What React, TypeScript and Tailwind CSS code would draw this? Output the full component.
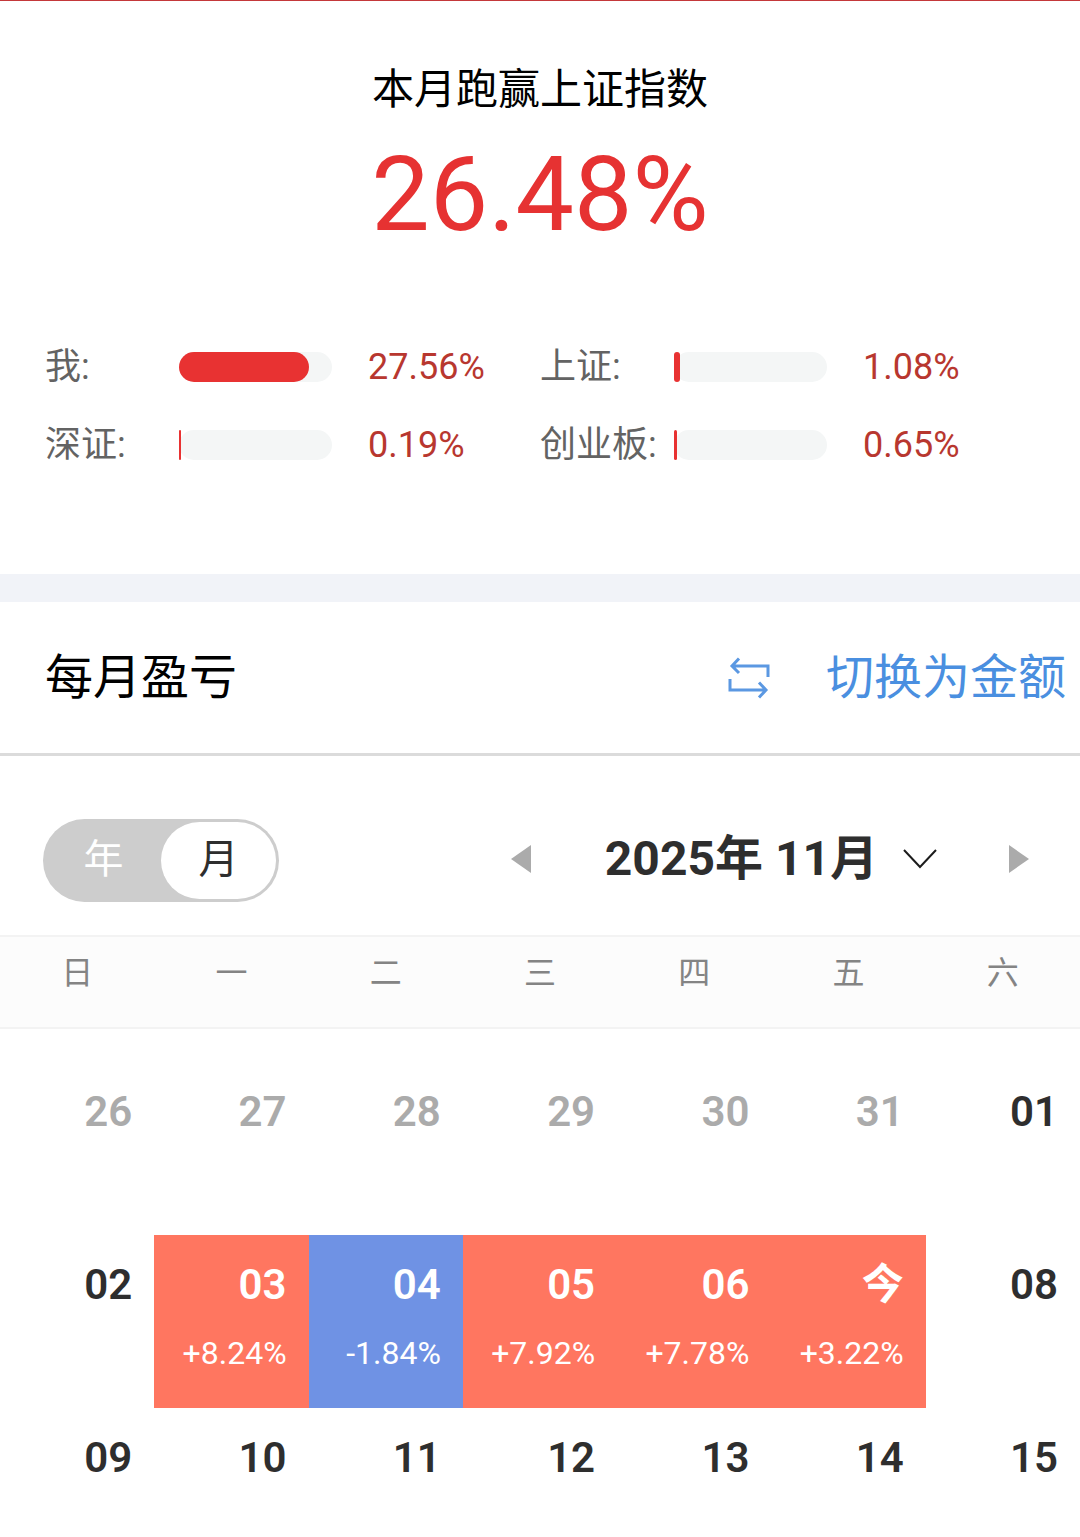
import { useState } from "react";

const BENCHMARKS = [
  { label: "我", value: 27.56, fill: 85 },
  { label: "上证", value: 1.08, fill: 4 },
  { label: "深证", value: 0.19, fill: 1 },
  { label: "创业板", value: 0.65, fill: 2 },
];

const WEEKDAYS = ["日", "一", "二", "三", "四", "五", "六"];

type Day = { label: string; muted?: boolean; change?: number };

const WEEKS: Day[][] = [
  [
    { label: "26", muted: true },
    { label: "27", muted: true },
    { label: "28", muted: true },
    { label: "29", muted: true },
    { label: "30", muted: true },
    { label: "31", muted: true },
    { label: "01" },
  ],
  [
    { label: "02" },
    { label: "03", change: 8.24 },
    { label: "04", change: -1.84 },
    { label: "05", change: 7.92 },
    { label: "06", change: 7.78 },
    { label: "今", change: 3.22 },
    { label: "08" },
  ],
  [
    { label: "09" },
    { label: "10" },
    { label: "11" },
    { label: "12" },
    { label: "13" },
    { label: "14" },
    { label: "15" },
  ],
];

function formatChange(change: number) {
  return `${change > 0 ? "+" : "-"}${Math.abs(change).toFixed(2)}%`;
}

function dayColor(day: Day) {
  if (day.change === undefined) {
    return day.muted ? "text-[#ababab]" : "text-[#2e2e2e]";
  }
  return day.change > 0 ? "bg-[#ff7660] text-white" : "bg-[#6f92e4] text-white";
}

function Summary() {
  return (
    <section className="border-t border-[#c4383a] pt-[59px] pb-[105px]">
      <h1 className="text-center text-[42px] leading-[60px] text-black">本月跑赢上证指数</h1>
      <p className="text-center text-[104px] leading-[150px] text-[#e63232]">26.48%</p>
      <dl className="mt-[73px] grid grid-cols-2 gap-y-[30px] px-[45px]">
        {BENCHMARKS.map(({ label, value, fill }) => (
          <div key={label} className="flex items-center text-[36px] leading-[48px]">
            <dt className="w-[134px] shrink-0 whitespace-nowrap text-[#636363]">{label}:</dt>
            <dd className="flex items-center gap-9 text-[#b8372f]">
              <span className="block h-[30px] w-[153px] rounded-full bg-[#f4f6f6]">
                <span
                  className="block h-full rounded-full bg-[#e83232]"
                  style={{ width: `${fill}%` }}
                />
              </span>
              {value.toFixed(2)}%
            </dd>
          </div>
        ))}
      </dl>
    </section>
  );
}

function SwapIcon() {
  return (
    <svg
      width="42"
      height="42"
      viewBox="0 0 42 42"
      fill="none"
      stroke="#5b98e2"
      strokeWidth="3"
      aria-hidden="true"
    >
      <path d="M40 20V9H4M11 1.5L4 9l7 7" />
      <path d="M2 22v11h36M31 25.5l7 7.5-7 7.5" />
    </svg>
  );
}

function PeriodToggle() {
  const [period, setPeriod] = useState("月");

  return (
    <div
      role="radiogroup"
      aria-label="周期"
      className="flex h-[83px] w-[236px] rounded-full bg-[#cdcdcd] p-[3px] text-[40px] leading-[60px]"
    >
      {["年", "月"].map((option) => (
        <label
          key={option}
          className="flex flex-1 cursor-pointer justify-center rounded-full pt-2 text-white has-checked:bg-white has-checked:text-[#2e2e2e]"
        >
          <input
            type="radio"
            name="period"
            value={option}
            checked={period === option}
            onChange={() => setPeriod(option)}
            className="sr-only"
          />
          {option}
        </label>
      ))}
    </div>
  );
}

function MonthPicker() {
  return (
    <div className="flex items-center text-[#2e2e2e]">
      <button type="button" aria-label="上个月">
        <svg width="20" height="28" viewBox="0 0 20 28" fill="#ababab">
          <path d="M20 0v28L0 14z" />
        </svg>
      </button>
      <button
        type="button"
        className="mr-[71px] ml-[74px] flex items-center gap-6 text-[48px] leading-[80px] font-bold"
      >
        2025年 11月
        <svg
          width="36"
          height="20"
          viewBox="0 0 36 20"
          fill="none"
          stroke="#1c1c1c"
          strokeWidth="2"
          aria-hidden="true"
        >
          <path d="M2 1l16 17L34 1" />
        </svg>
      </button>
      <button type="button" aria-label="下个月">
        <svg width="20" height="28" viewBox="0 0 20 28" fill="#ababab">
          <path d="M0 0v28l20-14z" />
        </svg>
      </button>
    </div>
  );
}

function Calendar() {
  return (
    <table className="w-full table-fixed">
      <thead>
        <tr className="h-[92px] border-y-2 border-[#f3f3f3] bg-[#fcfcfc] text-[32px] leading-[48px] text-[#848484]">
          {WEEKDAYS.map((weekday) => (
            <th key={weekday} scope="col" className="pt-3 align-top font-normal">
              {weekday}
            </th>
          ))}
        </tr>
      </thead>
      <tbody className="before:block before:h-[33px]">
        {WEEKS.map((week) => (
          <tr key={week[0].label} className="h-[173px]">
            {week.map((day) => (
              <td key={day.label} className={`pt-5 pr-[22px] text-right align-top ${dayColor(day)}`}>
                <span className="block text-[42px] leading-[60px] font-semibold">{day.label}</span>
                {day.change !== undefined && (
                  <span className="mt-3.5 block text-[32px] leading-[48px]">
                    {formatChange(day.change)}
                  </span>
                )}
              </td>
            ))}
          </tr>
        ))}
      </tbody>
    </table>
  );
}

export default function App() {
  return (
    <main className="h-screen overflow-hidden bg-white font-[Roboto,'Noto_Sans_CJK_SC',sans-serif]">
      <Summary />
      <section className="border-t-[28px] border-[#f1f3f8]">
        <header className="flex h-[154px] items-center justify-between border-b-[3px] border-[#dbdbdb] pr-3.5 pl-[45px] text-[48px] leading-[72px]">
          <h2 className="text-black">每月盈亏</h2>
          <button type="button" className="flex items-center gap-14 text-[#4a8fe0]">
            <SwapIcon />
            切换为金额
          </button>
        </header>
        <div className="flex items-start justify-between pt-[63px] pr-[51px] pb-[33px] pl-[43px]">
          <PeriodToggle />
          <MonthPicker />
        </div>
        <Calendar />
      </section>
    </main>
  );
}
